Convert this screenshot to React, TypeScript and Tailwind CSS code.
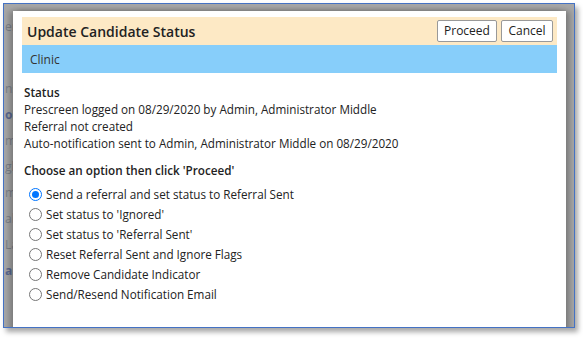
import React from "react";

const font = { fontFamily: '"Open Sans", "Noto Sans", sans-serif' };

function Radio({ checked }: { checked?: boolean }) {
  return (
    <span
      className={
        "inline-flex h-[13px] w-[13px] shrink-0 items-center justify-center rounded-full border " +
        (checked ? "border-[#0075ff]" : "border-[#767676]")
      }
    >
      {checked && <span className="h-[7px] w-[7px] rounded-full bg-[#0075ff]" />}
    </span>
  );
}

const options = [
  "Send a referral and set status to Referral Sent",
  "Set status to 'Ignored'",
  "Set status to 'Referral Sent'",
  "Reset Referral Sent and Ignore Flags",
  "Remove Candidate Indicator",
  "Send/Resend Notification Email",
];

export default function App() {
  return (
    <div className="h-[338px] w-[583px] bg-white" style={font}>
      <div className="pl-[3px] pt-[3px]">
        <div className="relative h-[325px] w-[572px] overflow-hidden border border-[#4472c4] bg-[#a8a8a8] shadow-[3px_4px_5px_rgba(0,0,0,0.35)]">
          {/* faint background page */}
          <div className="flex flex-col gap-[13px] pl-[1px] pt-[16px] text-[12px] leading-[13px] text-[#6b7280] opacity-70">
            <span>en</span>
            <span className="pt-[36px]">ns</span>
            <span className="font-bold text-[#3b4f8a]">or</span>
            <span>ma</span>
            <span>gl</span>
            <span>m</span>
            <span>al</span>
            <span>Lar</span>
            <span className="font-bold text-[#3b4f8a]">ar</span>
          </div>
          {/* modal */}
          <div className="absolute left-[9px] top-[7px] h-[330px] w-[553px] bg-white px-[9px] pt-[6px] shadow-[-4px_0_6px_rgba(0,0,0,0.25),4px_0_6px_rgba(0,0,0,0.25)]">
            <div className="flex h-[28px] items-center justify-between bg-[#fde9c5] pl-[5px] pr-[4px]">
              <span className="text-[14px] font-semibold text-[#222]">Update Candidate Status</span>
              <div className="flex gap-[4px]">
                <button className="h-[22px] w-[60px] rounded-[2px] border border-[#999] bg-white text-[12px] text-[#222]">
                  Proceed
                </button>
                <button className="h-[22px] w-[52px] rounded-[2px] border border-[#999] bg-white text-[12px] text-[#222]">
                  Cancel
                </button>
              </div>
            </div>
            <div className="flex h-[28px] items-center bg-[#87cefa] pl-[8px] pt-[2px] text-[12px] text-[#333]">
              Clinic
            </div>
            <div className="pl-[2px] pt-[11px] text-[11.7px] leading-[17px] text-[#222]">
              <div className="font-semibold">Status</div>
              <div>Prescreen logged on 08/29/2020 by Admin, Administrator Middle</div>
              <div>Referral not created</div>
              <div>Auto-notification sent to Admin, Administrator Middle on 08/29/2020</div>
              <div className="pt-[10px] font-semibold">Choose an option then click 'Proceed'</div>
              <div className="flex flex-col pt-[5px]">
                {options.map((o, i) => (
                  <label key={o} className="flex h-[20px] items-center gap-[4px] pl-[5px]">
                    <Radio checked={i === 0} />
                    <span>{o}</span>
                  </label>
                ))}
              </div>
            </div>
          </div>
        </div>
      </div>
    </div>
  );
}
